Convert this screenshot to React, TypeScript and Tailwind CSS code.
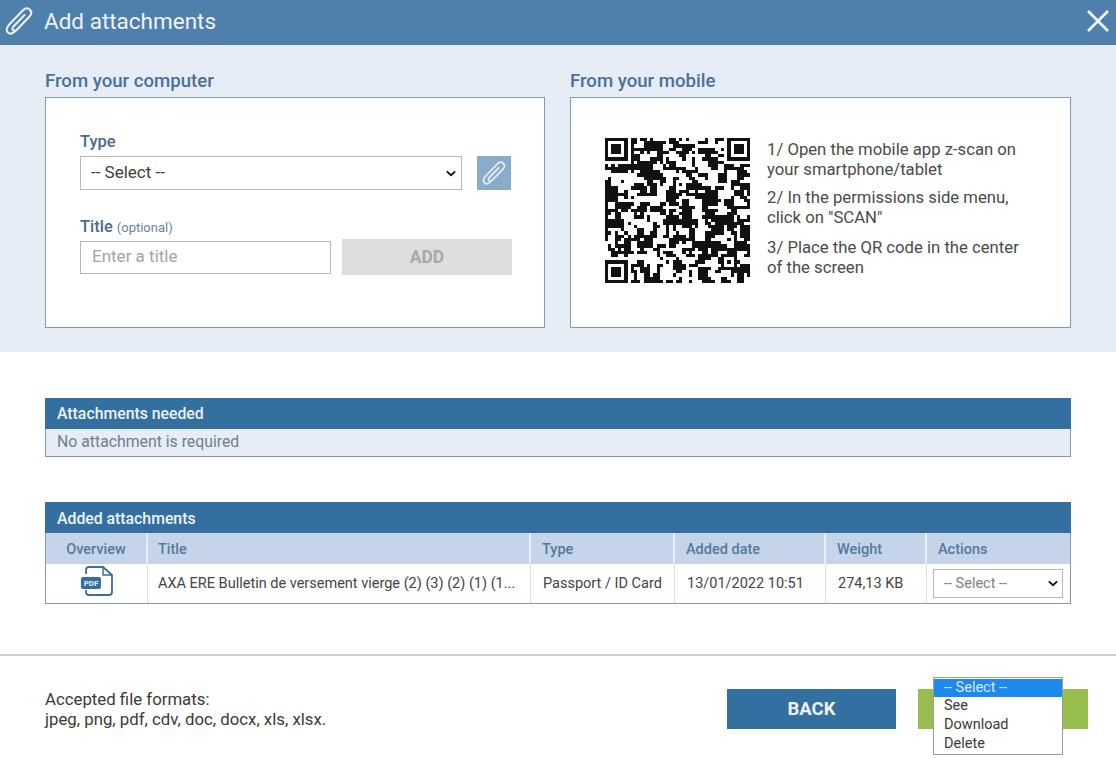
import React from 'react';

const font = "font-['Roboto',sans-serif]";

const Clip = ({ className }: { className: string }) => (
  <svg viewBox="0 0 28 28" fill="none" stroke="currentColor" strokeWidth="2" strokeLinecap="round" strokeLinejoin="round" className={className}>
    <path d="M20 9 9 20.5c-1.5 1.6-1.2 3-.3 3.8 1 .9 2.4.6 3.6-.6L25 10.5c2.3-2.4 2.2-5 .4-6.8-1.9-1.8-4.6-1.7-6.9.6L4.5 18.8c-2.8 3-3 6-1 7.7 1.9 1.6 4.6 1.2 6.7-1" transform="translate(-.5 -1)" />
  </svg>
);

// finder squares plus a fixed pseudo random fill for the code body
const QR_SIZE = 45;
const inBox = (x: number, y: number, ox: number, oy: number, s: number) => x >= ox && x < ox + s && y >= oy && y < oy + s;
const qrCells = () => {
  const cells: [number, number][] = [];
  const grid: boolean[][] = [];
  let seed = 987;
  const next = () => {
    seed = (seed * 1103515245 + 12345) & 0x7fffffff;
    return (seed >> 16) % 100;
  };
  for (let y = 0; y < QR_SIZE; y++) {
    grid[y] = [];
    for (let x = 0; x < QR_SIZE; x++) {
      // neighbours often share a value, which gives the clumps of the reference
      let on = next() < 54;
      const pick = next();
      if (pick < 28 && x > 0) on = grid[y][x - 1];
      else if (pick < 56 && y > 0) on = grid[y - 1][x];
      grid[y][x] = on;
      if (inBox(x, y, 0, 0, 8) || inBox(x, y, QR_SIZE - 8, 0, 8) || inBox(x, y, 0, QR_SIZE - 8, 8)) continue;
      if (inBox(x, y, 36, 36, 5)) continue;
      if (on) cells.push([x, y]);
    }
  }
  return cells;
};

const Finder = ({ x, y }: { x: number; y: number }) => (
  <g>
    <rect x={x + 0.5} y={y + 0.5} width="6" height="6" fill="none" stroke="#111" strokeWidth="1" />
    <rect x={x + 2} y={y + 2} width="3" height="3" fill="#111" />
  </g>
);

const QrCode = () => (
  <svg viewBox={`0 0 ${QR_SIZE} ${QR_SIZE}`} shapeRendering="crispEdges" className="w-[145px] h-[145px] shrink-0 -mt-[4px]">
    <path d={qrCells().map(([x, y]) => `M${x} ${y}h1v1h-1z`).join('')} fill="#111" />
    <Finder x={0} y={0} />
    <Finder x={QR_SIZE - 7} y={0} />
    <Finder x={0} y={QR_SIZE - 7} />
    <rect x="36.5" y="36.5" width="4" height="4" fill="none" stroke="#111" strokeWidth="1" />
    <rect x="38" y="38" width="1" height="1" fill="#111" />
  </svg>
);

const PdfIcon = () => (
  <svg viewBox="0 0 34 30" className="w-[34px] h-[30px] -mt-[6px]" fill="none">
    <path d="M6 8V4C6 2 7 1 9 1h14l9 8v17c0 2-1 3-3 3H9c-2 0-3-1-3-3v-2" stroke="#3f6f99" strokeWidth="1.8" />
    <path d="M23 1v8h9" stroke="#3f6f99" strokeWidth="1.5" />
    <rect x="1" y="11" width="20" height="12" rx="2" fill="#33709f" />
    <text x="11" y="20.2" textAnchor="middle" fontSize="8" fontWeight="700" fill="#e7edf6" fontFamily="Roboto, sans-serif">PDF</text>
  </svg>
);

const Chevron = () => (
  <svg viewBox="0 0 12 8" className="w-[10px] h-[7px]" fill="none" stroke="#111" strokeWidth="2.2">
    <path d="M1 1.5 6 6l5-4.5" />
  </svg>
);

const SelectBox = ({ className }: { className: string }) => (
  <div className={`flex items-center justify-between bg-white border border-[#b9b9b9] ${className}`}>
    <span>-- Select --</span>
    <Chevron />
  </div>
);

const columns = [
  { label: 'Overview', width: 'w-[102px]', pad: 'justify-center' },
  { label: 'Title', width: 'w-[383px]', pad: 'pl-[10px]' },
  { label: 'Type', width: 'w-[144px]', pad: 'pl-[11px]' },
  { label: 'Added date', width: 'w-[151px]', pad: 'pl-[11px]' },
  { label: 'Weight', width: 'w-[101px]', pad: 'pl-[11px]' },
  { label: 'Actions', width: 'flex-1', pad: 'pl-[11px]' },
];

export default function App() {
  return (
    <div className={`${font} w-[1116px] h-[759px] overflow-hidden bg-white text-[#3d3d3d]`}>
      <header className="h-[45px] bg-[#4f80ab] flex items-center justify-between pl-[5px] pr-[6px] pb-[3px] text-[#eef3f8]">
        <div className="flex items-center gap-[11px]">
          <Clip className="w-[28px] h-[28px]" />
          <span className="text-[22.5px] leading-none">Add attachments</span>
        </div>
        <svg viewBox="0 0 24 24" className="w-[24px] h-[24px]" fill="none" stroke="#f4f7fa" strokeWidth="2.6">
          <path d="M2 2l20 20M22 2 2 22" />
        </svg>
      </header>

      <section className="h-[307px] bg-[#e7edf6] px-[45px] pt-[24px] grid grid-cols-[500px_501px] gap-x-[25px]">
        <div>
          <h2 className="text-[18.6px] leading-[24px] font-medium text-[#4a7199] mb-[4px]">From your computer</h2>
          <div className="h-[231px] bg-white border border-[#7f9ab5] pl-[34px] pr-[33px] pt-[34px]">
            <div className="text-[16.5px] leading-[20px] font-medium text-[#4a6a8c] mb-[4px]">Type</div>
            <div className="flex justify-between">
              <SelectBox className="w-[382px] h-[34px] pl-[10px] pr-[5px] text-[17px]" />
              <div className="w-[34px] h-[34px] bg-[#8aaccb] flex items-center justify-center text-[#e7eff6]">
                <Clip className="w-[24px] h-[24px]" />
              </div>
            </div>
            <div className="mt-[27px] mb-[1px] leading-[20px] text-[#4a6a8c]">
              <span className="text-[16.5px] font-medium">Title</span>{' '}
              <span className="text-[13px] text-[#6d8299]">(optional)</span>
            </div>
            <div className="flex justify-between items-center -mr-[1px]">
              <div className="w-[251px] h-[33px] border border-[#b9b9b9] pl-[11px] flex items-center text-[17px] text-[#a3a3a3]">Enter a title</div>
              <div className="w-[170px] h-[36px] bg-[#dedede] flex items-center justify-center text-[17.5px] font-bold text-[#a8a8a8]">ADD</div>
            </div>
          </div>
        </div>
        <div>
          <h2 className="text-[18.6px] leading-[24px] font-medium text-[#4a7199] mb-[4px]">From your mobile</h2>
          <div className="h-[231px] bg-white border border-[#7f9ab5] pl-[34px] flex items-center gap-[17px]">
            <QrCode />
            <div className="text-[16.7px] leading-[20px] text-[#4a4a4a] w-[265px] -mt-[8px]">
              <p className="mb-[8px]">1/ Open the mobile app z-scan on your smartphone/tablet</p>
              <p className="mb-[10px]">2/ In the permissions side menu, click on "SCAN"</p>
              <p>3/ Place the QR code in the center of the screen</p>
            </div>
          </div>
        </div>
      </section>

      <section className="px-[45px] pt-[46px]">
        <div className="h-[31px] bg-[#33709f] flex items-center pl-[12px] text-[15.8px] font-medium text-[#eef3f8]">Attachments needed</div>
        <div className="h-[28px] bg-[#e7edf6] border border-t-0 border-[#7f9ab5] flex items-center pl-[11px] pb-[1px] text-[15.8px] text-[#6f7f8f]">No attachment is required</div>

        <div className="mt-[45px] h-[31px] bg-[#33709f] flex items-center pl-[12px] pt-[2px] text-[15.8px] font-medium text-[#eef3f8]">Added attachments</div>
        <div className="border-x border-b border-[#7f9ab5]">
          <div className="flex h-[31px] bg-[#c5d4e8] text-[14.5px] font-medium text-[#55799e]">
            {columns.map((c) => (
              <div key={c.label} className={`${c.width} ${c.pad} flex items-center pt-[2px] border-r-2 border-[#e7edf6] last:border-r-0`}>
                {c.label}
              </div>
            ))}
          </div>
          <div className="flex h-[39px] text-[14.5px] text-[#444]">
            <div className="w-[102px] flex items-center justify-center border-r border-[#d9e2ee]"><PdfIcon /></div>
            <div className="w-[383px] flex items-center pl-[10px] border-r border-[#d9e2ee] whitespace-nowrap overflow-hidden">AXA ERE Bulletin de versement vierge (2) (3) (2) (1) (1...</div>
            <div className="w-[144px] flex items-center pl-[12px] border-r border-[#d9e2ee] whitespace-nowrap">Passport / ID Card</div>
            <div className="w-[151px] flex items-center pl-[12px] border-r border-[#d9e2ee] whitespace-nowrap">13/01/2022 10:51</div>
            <div className="w-[101px] flex items-center pl-[12px] border-r border-[#d9e2ee] whitespace-nowrap">274,13 KB</div>
            <div className="flex-1 flex items-center pl-[6px]">
              <SelectBox className="w-[130px] h-[29px] pl-[10px] pr-[4px] text-[14.5px] text-[#808080]" />
            </div>
          </div>
        </div>
      </section>

      <footer className="mt-[50px] h-[104px] border-t-2 border-[#c3d0dd] pl-[45px] pr-[28px] flex items-center justify-between">
        <div className="text-[16.8px] leading-[20px] text-[#3a3a3a] mt-[4px]">
          <div>Accepted file formats:</div>
          <div>jpeg, png, pdf, cdv, doc, docx, xls, xlsx.</div>
        </div>
        <div className="flex gap-[22px] mt-[3px]">
          <div className="w-[169px] h-[40px] bg-[#33709f] flex items-center justify-center pt-[2px] text-[18.5px] font-bold text-[#eef3f8]">BACK</div>
          <div className="relative w-[170px] h-[40px] bg-[#97bd4f]">
            <ul className="absolute left-[15px] -top-[12px] w-[130px] bg-white border border-[#9a9a9a] pt-[1px] text-[14.5px] leading-[18.75px] text-[#3a3a3a]">
              <li className="bg-[#1e88ec] text-[#d9ebfb] pl-[10px]">-- Select --</li>
              <li className="pl-[10px]">See</li>
              <li className="pl-[10px]">Download</li>
              <li className="pl-[10px]">Delete</li>
            </ul>
          </div>
        </div>
      </footer>
    </div>
  );
}
